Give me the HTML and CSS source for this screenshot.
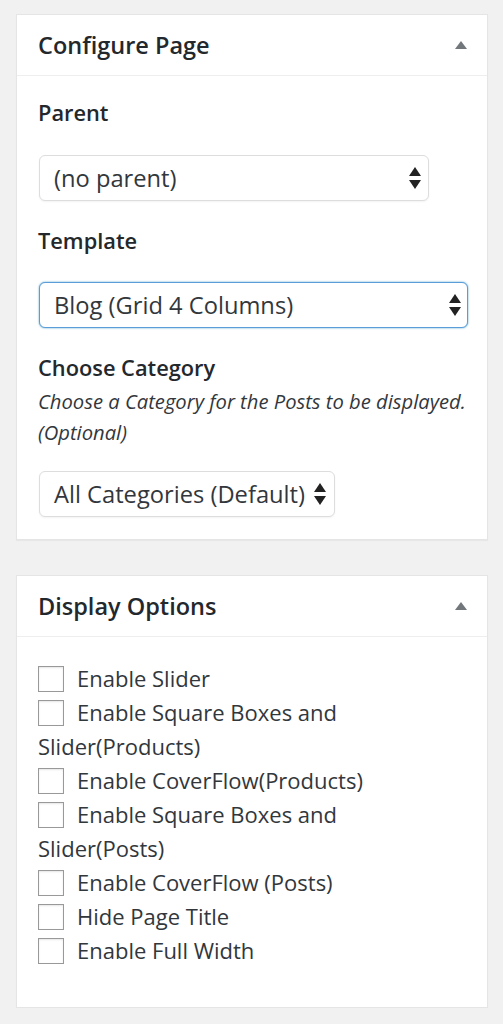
FILE: index.html
```html
<!DOCTYPE html>
<html>
<head>
<meta charset="utf-8">
<link rel="stylesheet" href="styles.css">
</head>
<body>
<div class="page">
  <section class="panel">
    <header class="panel-head">
      <h2 class="panel-title">Configure Page</h2>
      <svg class="toggle" width="12" height="8" viewBox="0 0 12 8"><polygon points="6,0 12,8 0,8" fill="#72777c"/></svg>
    </header>
    <div class="panel-body config">
      <div class="label">Parent</div>
      <div class="select sel-parent">
        <span class="sel-text">(no parent)</span>
        <svg class="arrows" width="12" height="22" viewBox="0 0 12 22"><polygon points="6,0 12,9 0,9" fill="#222"/><polygon points="0,13 12,13 6,22" fill="#222"/></svg>
      </div>
      <div class="label">Template</div>
      <div class="select sel-template focus">
        <span class="sel-text">Blog (Grid 4 Columns)</span>
        <svg class="arrows" width="12" height="22" viewBox="0 0 12 22"><polygon points="6,0 12,9 0,9" fill="#222"/><polygon points="0,13 12,13 6,22" fill="#222"/></svg>
      </div>
      <div class="label label-cat">Choose Category</div>
      <p class="desc">Choose a Category for the Posts to be displayed. (Optional)</p>
      <div class="select sel-cat">
        <span class="sel-text">All Categories (Default)</span>
        <svg class="arrows" width="12" height="22" viewBox="0 0 12 22"><polygon points="6,0 12,9 0,9" fill="#222"/><polygon points="0,13 12,13 6,22" fill="#222"/></svg>
      </div>
    </div>
  </section>

  <section class="panel panel-display">
    <header class="panel-head">
      <h2 class="panel-title">Display Options</h2>
      <svg class="toggle" width="12" height="8" viewBox="0 0 12 8"><polygon points="6,0 12,8 0,8" fill="#72777c"/></svg>
    </header>
    <div class="panel-body options">
      <div class="opt"><span class="box"></span>Enable Slider</div>
      <div class="opt"><span class="box"></span>Enable Square Boxes and Slider(Products)</div>
      <div class="opt"><span class="box"></span>Enable CoverFlow(Products)</div>
      <div class="opt"><span class="box"></span>Enable Square Boxes and Slider(Posts)</div>
      <div class="opt"><span class="box"></span>Enable CoverFlow (Posts)</div>
      <div class="opt"><span class="box"></span>Hide Page Title</div>
      <div class="opt"><span class="box"></span>Enable Full Width</div>
    </div>
  </section>
</div>
</body>
</html>
```
FILE: styles.css
```css
html, body {
  margin: 0;
  padding: 0;
  background: #f1f1f1;
}
body {
  font-family: "Open Sans", "Noto Sans", sans-serif;
  color: #32373c;
}
.page {
  padding: 14px 15px 0 16px;
  display: flex;
  flex-direction: column;
  gap: 35px;
}
.panel {
  background: #fff;
  border: 1px solid #e5e5e5;
  box-shadow: 0 1px 1px rgba(0,0,0,0.04);
}
.panel-head {
  height: 60px;
  border-bottom: 1px solid #eeeeee;
  display: flex;
  align-items: center;
  justify-content: space-between;
  padding: 0 20px 0 21px;
}
.panel-title {
  margin: 0;
  font-size: 23.5px;
  font-weight: 600;
  color: #23282d;
  line-height: 30px;
}
.toggle {
  display: block;
  margin-right: 0;
}
.panel-body {
  padding: 23px 21px 22px 21px;
}
.config {
  display: flex;
  flex-direction: column;
  align-items: flex-start;
}
.label {
  font-size: 21.8px;
  font-weight: 600;
  line-height: 28px;
  color: #23282d;
}
.select {
  box-sizing: border-box;
  height: 46px;
  border: 1px solid #dddddd;
  border-radius: 6px;
  display: flex;
  align-items: center;
  justify-content: space-between;
  padding: 0 7px 0 14px;
  margin: 28px 0 26px 1px;
  background: #fff;
  box-shadow: 0 1px 2px rgba(0,0,0,0.05);
}
.sel-text {
  font-size: 23.7px;
  color: #32373c;
  white-space: nowrap;
}
.arrows {
  display: block;
  flex: none;
}
.sel-parent {
  width: 390px;
}
.sel-template {
  width: 429px;
  margin-top: 27px;
  margin-bottom: 26px;
  padding-right: 6px;
}
.focus {
  border-color: #5b9dd9;
  box-shadow: 0 0 2px rgba(30,140,190,0.8);
}
.sel-cat {
  gap: 9px;
  padding-right: 8px;
  margin-top: 23px;
  margin-bottom: 0;
}
.desc {
  margin: 4px 0 0 0;
  font-style: italic;
  font-size: 20.2px;
  line-height: 31px;
  color: #32373c;
}
.options {
  padding: 24px 21px 40px 21px;
}
.opt {
  font-size: 22px;
  line-height: 34px;
  color: #32373c;
}
.box {
  display: inline-block;
  box-sizing: border-box;
  width: 26px;
  height: 26px;
  border: 1px solid #999999;
  background: #fff;
  box-shadow: inset 0 1px 2px rgba(0,0,0,0.1);
  vertical-align: middle;
  margin: -4px 13px 0 0;
}
```
